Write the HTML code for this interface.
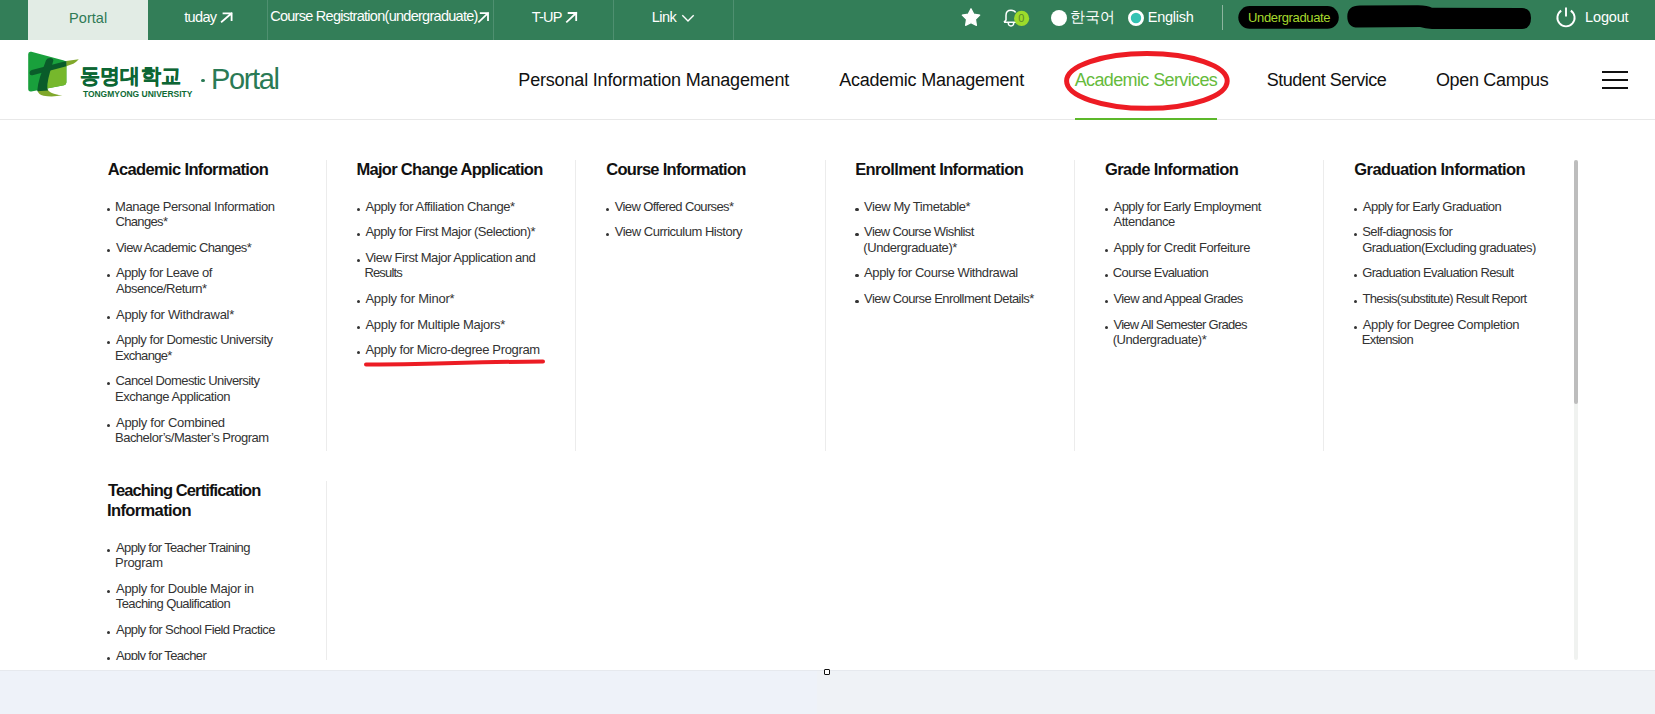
<!DOCTYPE html>
<html><head><meta charset="utf-8"><title>Portal</title>
<style>
html,body{margin:0;padding:0;}
body{width:1655px;height:714px;overflow:hidden;position:relative;background:#fff;font-family:"Liberation Sans", sans-serif;}
.t{position:absolute;white-space:nowrap;line-height:1;font-family:"Liberation Sans", sans-serif;}
.r{position:absolute;}
svg.r{overflow:visible;}
</style></head><body>
<div class="r" style="left:0px;top:0px;width:1655px;height:40px;background:#337e58;"></div>
<div class="r" style="left:28px;top:0px;width:120px;height:40px;background:#e2ece5;"></div>
<div class="r" style="left:267px;top:0px;width:1px;height:40px;background:#4f9070;"></div>
<div class="r" style="left:493px;top:0px;width:1px;height:40px;background:#4f9070;"></div>
<div class="r" style="left:613px;top:0px;width:1px;height:40px;background:#4f9070;"></div>
<div class="r" style="left:733px;top:0px;width:1px;height:40px;background:#4f9070;"></div>
<div class="t" style="left:69.11px;top:10.52px;font-size:14.5px;color:#2f7a55;letter-spacing:0.036px;">Portal</div>
<div class="t" style="left:184.28px;top:9.52px;font-size:14.5px;color:#fff;letter-spacing:-0.681px;">tuday</div>
<div class="t" style="left:270.16px;top:9.22px;font-size:14.5px;color:#fff;letter-spacing:-0.724px;">Course Registration(undergraduate)</div>
<div class="t" style="left:531.87px;top:9.62px;font-size:14.5px;color:#fff;letter-spacing:-0.813px;">T-UP</div>
<div class="t" style="left:651.81px;top:9.52px;font-size:14.5px;color:#fff;letter-spacing:-0.577px;">Link</div>
<svg class="r" style="left:0;top:0" width="1655" height="40"><path d="M221.8,21.8 L231.6,13.3 M223.5,13.3 L231.6,13.3 L231.6,20.1" stroke="#fff" stroke-width="1.8" fill="none" stroke-linecap="square"/></svg>
<svg class="r" style="left:0;top:0" width="1655" height="40"><path d="M479.0,21.8 L488.0,13.100000000000001 M480.7,13.100000000000001 L488.0,13.100000000000001 L488.0,20.1" stroke="#fff" stroke-width="1.8" fill="none" stroke-linecap="square"/></svg>
<svg class="r" style="left:0;top:0" width="1655" height="40"><path d="M566.9,21.8 L576.2,13.0 M568.6,13.0 L576.2,13.0 L576.2,20.1" stroke="#fff" stroke-width="1.8" fill="none" stroke-linecap="square"/></svg>
<svg class="r" style="left:0;top:0" width="1655" height="40"><path d="M682.3,15.3 L688,21 L693.7,15.3" stroke="#fff" stroke-width="1.4" fill="none"/></svg>
<svg class="r" style="left:0;top:0" width="1655" height="40"><path d="M971.00,8.70 L973.76,14.10 L979.75,15.06 L975.47,19.35 L976.41,25.34 L971.00,22.60 L965.59,25.34 L966.53,19.35 L962.25,15.06 L968.24,14.10 Z" fill="#fff" stroke="#fff" stroke-width="1.2" stroke-linejoin="round"/><path d="M1004,22.3 L1006,20 L1006,15.2 Q1006,10.2 1011,10.2 Q1014.5,10.2 1015.6,12.5 M1004,22.3 L1016,22.3" stroke="#fff" stroke-width="1.5" fill="none" stroke-linejoin="round"/><path d="M1008.2,22.6 Q1008.2,26 1011,26 Q1013.8,26 1013.8,22.6" stroke="#fff" stroke-width="1.4" fill="none"/><circle cx="1021.6" cy="18.4" r="7.6" fill="#9ddb2b"/><circle cx="1059" cy="18" r="8" fill="#fff"/><circle cx="1136" cy="18" r="6.6" fill="#33c3b3" stroke="#fff" stroke-width="2.8"/><rect x="1222" y="5" width="1" height="25" fill="#8db59f"/><rect x="1238.3" y="6.1" width="100.5" height="22.6" rx="11.3" fill="#000"/><path d="M1360,5.5 L1418,5.2 Q1428,5.3 1432,7.8 L1522,8 Q1531,8 1531,18 Q1531,28.8 1522,29 L1432,29 Q1425,28.5 1420,27 L1358,27.6 Q1347.3,27.6 1347.3,16.5 Q1347.3,5.5 1360,5.5 Z" fill="#000"/><path d="M1561.2,10.6 A8.6,8.6 0 1 0 1570.8,10.6" stroke="#fff" stroke-width="1.9" fill="none"/><path d="M1566,7.6 L1566,16.6" stroke="#fff" stroke-width="1.9"/></svg>
<div class="t" style="left:1018.17px;top:12.69px;font-size:11px;color:#5b8a2c;">0</div>
<div class="t" style="left:1070.30px;top:8.80px;font-size:15px;color:#fff;">한국어</div>
<div class="t" style="left:1147.71px;top:10.22px;font-size:14.5px;color:#fff;letter-spacing:-0.221px;">English</div>
<div class="t" style="left:1248.00px;top:10.74px;font-size:13px;color:#a6d92d;letter-spacing:-0.346px;">Undergraduate</div>
<div class="t" style="left:1585.11px;top:9.52px;font-size:14.5px;color:#fff;letter-spacing:-0.171px;">Logout</div>
<div class="r" style="left:0px;top:119px;width:1655px;height:1px;background:#e8e8e8;"></div>
<div class="r" style="left:1075px;top:118px;width:142px;height:2px;background:#5cb82a;"></div>
<svg class="r" style="left:0;top:40px" width="300" height="79" viewBox="0 40 300 79"><path d="M28.2,54.3 Q28.2,51 31.4,51.8 L64,60.4 Q66.4,61 66.4,63.6 L66.4,82.3 Q66.4,84.7 64,85.2 L31.3,91.5 Q28.2,92 28.2,88.8 Z" fill="#19a03c"/><path d="M48.6,68.8 L66.4,64 L66.4,82.3 Q66.4,84.7 64,85.2 L47,88.5 Z" fill="#76b82c"/><path d="M66.2,61.1 L78.8,59.3 Q76.5,62 73.3,63.7 L66.2,66.2 Z" fill="#80a82b"/><path d="M37.5,90.6 Q38.5,95 43.5,95.8 Q53,97.2 62.4,95.3 Q55,94.5 50.8,92.4 Q48.3,91 47.5,89.3 Z" fill="#80a82b"/><path d="M31.8,70.1 L66.4,61.1 L66.4,66.2 L32.5,75.2 Q29.6,75.9 29.6,73 Q29.7,70.7 31.8,70.1 Z" fill="#0a5c2a"/><path d="M50.2,57.9 Q53.8,58 53.3,60.8 L50,72 Q48.2,78.5 47.3,84 Q47,88 48,90.6 L37.2,91.3 Q37.8,84 40,77 L46,60.3 Q47.2,57.8 50.2,57.9 Z" fill="#0a5c2a"/></svg>
<svg class="r" style="left:0;top:40px" width="300" height="79" viewBox="0 40 300 79"><text x="80.4" y="82.6" font-family="Liberation Sans" font-weight="bold" font-size="21" fill="#0d6634" stroke="#0d6634" stroke-width="0.35" textLength="100.2" lengthAdjust="spacingAndGlyphs">동명대학교</text><text x="82.9" y="97.3" font-family="Liberation Sans" font-weight="bold" font-size="8.7" fill="#0d6b35" textLength="109.5" lengthAdjust="spacingAndGlyphs">TONGMYONG UNIVERSITY</text></svg>
<div class="r" style="left:201px;top:79px;width:3.6px;height:3.2px;background:#2a7a55;border-radius:50%"></div>
<div class="t" style="left:211.12px;top:65.45px;font-size:29px;color:#2a7a55;letter-spacing:-1.408px;">Portal</div>
<div class="t" style="left:518.32px;top:70.66px;font-size:18px;color:#111;letter-spacing:-0.175px;">Personal Information Management</div>
<div class="t" style="left:839.16px;top:70.66px;font-size:18px;color:#111;letter-spacing:-0.229px;">Academic Management</div>
<div class="t" style="left:1074.66px;top:70.66px;font-size:18px;color:#66bb3c;letter-spacing:-0.617px;">Academic Services</div>
<div class="t" style="left:1266.78px;top:70.66px;font-size:18px;color:#111;letter-spacing:-0.497px;">Student Service</div>
<div class="t" style="left:1435.95px;top:70.66px;font-size:18px;color:#111;letter-spacing:-0.326px;">Open Campus</div>
<div class="r" style="left:1602px;top:71px;width:26px;height:2px;background:#111;"></div>
<div class="r" style="left:1602px;top:79px;width:26px;height:2px;background:#111;"></div>
<div class="r" style="left:1602px;top:87px;width:26px;height:2px;background:#111;"></div>
<svg class="r" style="left:1040px;top:40px" width="220" height="80" viewBox="1040 40 220 80"><ellipse cx="1146.9" cy="80.9" rx="80.3" ry="27.4" fill="none" stroke="#ed1c24" stroke-width="5"/></svg>
<div class="t" style="left:107.79px;top:160.73px;font-size:16.5px;color:#111;font-weight:bold;letter-spacing:-0.650px;">Academic Information</div>
<div class="r" style="left:107.3px;top:207.5px;width:3.2px;height:3.2px;background:#333;border-radius:50%"></div>
<div class="t" style="left:115.03px;top:199.69px;font-size:13px;color:#333;letter-spacing:-0.405px;">Manage Personal Information</div>
<div class="t" style="left:115.44px;top:215.29px;font-size:13px;color:#333;letter-spacing:-0.648px;">Changes*</div>
<div class="r" style="left:107.3px;top:248.7px;width:3.2px;height:3.2px;background:#333;border-radius:50%"></div>
<div class="t" style="left:116.04px;top:240.89px;font-size:13px;color:#333;letter-spacing:-0.615px;">View Academic Changes*</div>
<div class="r" style="left:107.3px;top:274.3px;width:3.2px;height:3.2px;background:#333;border-radius:50%"></div>
<div class="t" style="left:116.07px;top:266.49px;font-size:13px;color:#333;letter-spacing:-0.505px;">Apply for Leave of</div>
<div class="t" style="left:116.07px;top:282.09px;font-size:13px;color:#333;letter-spacing:-0.518px;">Absence/Return*</div>
<div class="r" style="left:107.3px;top:315.5px;width:3.2px;height:3.2px;background:#333;border-radius:50%"></div>
<div class="t" style="left:116.07px;top:307.69px;font-size:13px;color:#333;letter-spacing:-0.307px;">Apply for Withdrawal*</div>
<div class="r" style="left:107.3px;top:341.1px;width:3.2px;height:3.2px;background:#333;border-radius:50%"></div>
<div class="t" style="left:116.07px;top:333.29px;font-size:13px;color:#333;letter-spacing:-0.454px;">Apply for Domestic University</div>
<div class="t" style="left:115.03px;top:348.89px;font-size:13px;color:#333;letter-spacing:-0.701px;">Exchange*</div>
<div class="r" style="left:107.3px;top:382.3px;width:3.2px;height:3.2px;background:#333;border-radius:50%"></div>
<div class="t" style="left:115.44px;top:374.49px;font-size:13px;color:#333;letter-spacing:-0.570px;">Cancel Domestic University</div>
<div class="t" style="left:115.03px;top:390.09px;font-size:13px;color:#333;letter-spacing:-0.469px;">Exchange Application</div>
<div class="r" style="left:107.3px;top:423.5px;width:3.2px;height:3.2px;background:#333;border-radius:50%"></div>
<div class="t" style="left:116.07px;top:415.69px;font-size:13px;color:#333;letter-spacing:-0.306px;">Apply for Combined</div>
<div class="t" style="left:115.03px;top:431.29px;font-size:13px;color:#333;letter-spacing:-0.514px;">Bachelor’s/Master’s Program</div>
<div class="r" style="left:326px;top:160px;width:1px;height:291px;background:#ececec;"></div>
<div class="t" style="left:356.45px;top:160.73px;font-size:16.5px;color:#111;font-weight:bold;letter-spacing:-0.699px;">Major Change Application</div>
<div class="r" style="left:356.6px;top:207.5px;width:3.2px;height:3.2px;background:#333;border-radius:50%"></div>
<div class="t" style="left:365.42px;top:199.69px;font-size:13px;color:#333;letter-spacing:-0.398px;">Apply for Affiliation Change*</div>
<div class="r" style="left:356.6px;top:233.1px;width:3.2px;height:3.2px;background:#333;border-radius:50%"></div>
<div class="t" style="left:365.42px;top:225.29px;font-size:13px;color:#333;letter-spacing:-0.512px;">Apply for First Major (Selection)*</div>
<div class="r" style="left:356.6px;top:258.7px;width:3.2px;height:3.2px;background:#333;border-radius:50%"></div>
<div class="t" style="left:365.39px;top:250.89px;font-size:13px;color:#333;letter-spacing:-0.461px;">View First Major Application and</div>
<div class="t" style="left:364.38px;top:266.49px;font-size:13px;color:#333;letter-spacing:-0.819px;">Results</div>
<div class="r" style="left:356.6px;top:299.9px;width:3.2px;height:3.2px;background:#333;border-radius:50%"></div>
<div class="t" style="left:365.42px;top:292.09px;font-size:13px;color:#333;letter-spacing:-0.217px;">Apply for Minor*</div>
<div class="r" style="left:356.6px;top:325.5px;width:3.2px;height:3.2px;background:#333;border-radius:50%"></div>
<div class="t" style="left:365.42px;top:317.69px;font-size:13px;color:#333;letter-spacing:-0.302px;">Apply for Multiple Majors*</div>
<div class="r" style="left:356.6px;top:351.1px;width:3.2px;height:3.2px;background:#333;border-radius:50%"></div>
<div class="t" style="left:365.42px;top:343.29px;font-size:13px;color:#333;letter-spacing:-0.354px;">Apply for Micro-degree Program</div>
<div class="r" style="left:575px;top:160px;width:1px;height:291px;background:#ececec;"></div>
<div class="t" style="left:606.22px;top:160.73px;font-size:16.5px;color:#111;font-weight:bold;letter-spacing:-0.704px;">Course Information</div>
<div class="r" style="left:606.0px;top:207.5px;width:3.2px;height:3.2px;background:#333;border-radius:50%"></div>
<div class="t" style="left:614.74px;top:199.69px;font-size:13px;color:#333;letter-spacing:-0.623px;">View Offered Courses*</div>
<div class="r" style="left:606.0px;top:233.1px;width:3.2px;height:3.2px;background:#333;border-radius:50%"></div>
<div class="t" style="left:614.74px;top:225.29px;font-size:13px;color:#333;letter-spacing:-0.487px;">View Curriculum History</div>
<div class="r" style="left:825px;top:160px;width:1px;height:291px;background:#ececec;"></div>
<div class="t" style="left:855.15px;top:160.73px;font-size:16.5px;color:#111;font-weight:bold;letter-spacing:-0.613px;">Enrollment Information</div>
<div class="r" style="left:855.4px;top:207.5px;width:3.2px;height:3.2px;background:#333;border-radius:50%"></div>
<div class="t" style="left:864.09px;top:199.69px;font-size:13px;color:#333;letter-spacing:-0.436px;">View My Timetable*</div>
<div class="r" style="left:855.4px;top:233.1px;width:3.2px;height:3.2px;background:#333;border-radius:50%"></div>
<div class="t" style="left:864.09px;top:225.29px;font-size:13px;color:#333;letter-spacing:-0.612px;">View Course Wishlist</div>
<div class="t" style="left:863.34px;top:240.89px;font-size:13px;color:#333;letter-spacing:-0.429px;">(Undergraduate)*</div>
<div class="r" style="left:855.4px;top:274.3px;width:3.2px;height:3.2px;background:#333;border-radius:50%"></div>
<div class="t" style="left:864.12px;top:266.49px;font-size:13px;color:#333;letter-spacing:-0.413px;">Apply for Course Withdrawal</div>
<div class="r" style="left:855.4px;top:299.9px;width:3.2px;height:3.2px;background:#333;border-radius:50%"></div>
<div class="t" style="left:864.09px;top:292.09px;font-size:13px;color:#333;letter-spacing:-0.583px;">View Course Enrollment Details*</div>
<div class="r" style="left:1074px;top:160px;width:1px;height:291px;background:#ececec;"></div>
<div class="t" style="left:1104.92px;top:160.73px;font-size:16.5px;color:#111;font-weight:bold;letter-spacing:-0.570px;">Grade Information</div>
<div class="r" style="left:1104.7px;top:207.5px;width:3.2px;height:3.2px;background:#333;border-radius:50%"></div>
<div class="t" style="left:1113.47px;top:199.69px;font-size:13px;color:#333;letter-spacing:-0.503px;">Apply for Early Employment</div>
<div class="t" style="left:1113.47px;top:215.29px;font-size:13px;color:#333;letter-spacing:-0.441px;">Attendance</div>
<div class="r" style="left:1104.7px;top:248.7px;width:3.2px;height:3.2px;background:#333;border-radius:50%"></div>
<div class="t" style="left:1113.47px;top:240.89px;font-size:13px;color:#333;letter-spacing:-0.455px;">Apply for Credit Forfeiture</div>
<div class="r" style="left:1104.7px;top:274.3px;width:3.2px;height:3.2px;background:#333;border-radius:50%"></div>
<div class="t" style="left:1112.84px;top:266.49px;font-size:13px;color:#333;letter-spacing:-0.639px;">Course Evaluation</div>
<div class="r" style="left:1104.7px;top:299.9px;width:3.2px;height:3.2px;background:#333;border-radius:50%"></div>
<div class="t" style="left:1113.44px;top:292.09px;font-size:13px;color:#333;letter-spacing:-0.618px;">View and Appeal Grades</div>
<div class="r" style="left:1104.7px;top:325.5px;width:3.2px;height:3.2px;background:#333;border-radius:50%"></div>
<div class="t" style="left:1113.44px;top:317.69px;font-size:13px;color:#333;letter-spacing:-0.722px;">View All Semester Grades</div>
<div class="t" style="left:1112.69px;top:333.29px;font-size:13px;color:#333;letter-spacing:-0.429px;">(Undergraduate)*</div>
<div class="r" style="left:1323px;top:160px;width:1px;height:291px;background:#ececec;"></div>
<div class="t" style="left:1354.27px;top:160.73px;font-size:16.5px;color:#111;font-weight:bold;letter-spacing:-0.568px;">Graduation Information</div>
<div class="r" style="left:1354.0px;top:207.5px;width:3.2px;height:3.2px;background:#333;border-radius:50%"></div>
<div class="t" style="left:1362.82px;top:199.69px;font-size:13px;color:#333;letter-spacing:-0.540px;">Apply for Early Graduation</div>
<div class="r" style="left:1354.0px;top:233.1px;width:3.2px;height:3.2px;background:#333;border-radius:50%"></div>
<div class="t" style="left:1362.26px;top:225.29px;font-size:13px;color:#333;letter-spacing:-0.584px;">Self-diagnosis for</div>
<div class="t" style="left:1362.20px;top:240.89px;font-size:13px;color:#333;letter-spacing:-0.557px;">Graduation(Excluding graduates)</div>
<div class="r" style="left:1354.0px;top:274.3px;width:3.2px;height:3.2px;background:#333;border-radius:50%"></div>
<div class="t" style="left:1362.20px;top:266.49px;font-size:13px;color:#333;letter-spacing:-0.639px;">Graduation Evaluation Result</div>
<div class="r" style="left:1354.0px;top:299.9px;width:3.2px;height:3.2px;background:#333;border-radius:50%"></div>
<div class="t" style="left:1362.56px;top:292.09px;font-size:13px;color:#333;letter-spacing:-0.680px;">Thesis(substitute) Result Report</div>
<div class="r" style="left:1354.0px;top:325.5px;width:3.2px;height:3.2px;background:#333;border-radius:50%"></div>
<div class="t" style="left:1362.82px;top:317.69px;font-size:13px;color:#333;letter-spacing:-0.390px;">Apply for Degree Completion</div>
<div class="t" style="left:1361.78px;top:333.29px;font-size:13px;color:#333;letter-spacing:-0.648px;">Extension</div>
<svg class="r" style="left:0;top:0" width="1655" height="714"><path d="M366,364.6 Q420,364.2 455,363 Q500,361.8 543,361.5" stroke="#ec1c24" stroke-width="4" stroke-linecap="round" fill="none"/></svg>
<div class="r" style="left:0;top:0;width:1655px;height:660px;overflow:hidden">
<div class="t" style="left:108.01px;top:481.73px;font-size:16.5px;color:#111;font-weight:bold;letter-spacing:-0.889px;">Teaching Certification</div>
<div class="t" style="left:107.10px;top:501.63px;font-size:16.5px;color:#111;font-weight:bold;letter-spacing:-0.637px;">Information</div>
<div class="r" style="left:107.3px;top:548.5px;width:3.2px;height:3.2px;background:#333;border-radius:50%"></div>
<div class="t" style="left:116.07px;top:540.69px;font-size:13px;color:#333;letter-spacing:-0.657px;">Apply for Teacher Training</div>
<div class="t" style="left:115.03px;top:556.29px;font-size:13px;color:#333;letter-spacing:-0.304px;">Program</div>
<div class="r" style="left:107.3px;top:589.7px;width:3.2px;height:3.2px;background:#333;border-radius:50%"></div>
<div class="t" style="left:116.07px;top:581.89px;font-size:13px;color:#333;letter-spacing:-0.333px;">Apply for Double Major in</div>
<div class="t" style="left:115.81px;top:597.49px;font-size:13px;color:#333;letter-spacing:-0.585px;">Teaching Qualification</div>
<div class="r" style="left:107.3px;top:630.9px;width:3.2px;height:3.2px;background:#333;border-radius:50%"></div>
<div class="t" style="left:116.07px;top:623.09px;font-size:13px;color:#333;letter-spacing:-0.591px;">Apply for School Field Practice</div>
<div class="r" style="left:107.3px;top:656.5px;width:3.2px;height:3.2px;background:#333;border-radius:50%"></div>
<div class="t" style="left:116.07px;top:648.69px;font-size:13px;color:#333;letter-spacing:-0.641px;">Apply for Teacher</div>
<div class="t" style="left:115.44px;top:664.29px;font-size:13px;color:#333;letter-spacing:-0.430px;">Certification</div>
<div class="r" style="left:326px;top:481px;width:1px;height:179px;background:#ececec;"></div>
</div>
<div class="r" style="left:1574px;top:160px;width:4px;height:500px;background:#f0f2f0;border-radius:2px"></div>
<div class="r" style="left:1574px;top:160px;width:4px;height:244px;background:#bdbdbd;border-radius:2px"></div>
<div class="r" style="left:0px;top:670px;width:1655px;height:44px;background:#eff2f6;"></div>
<div class="r" style="left:0px;top:670px;width:817px;height:44px;background:#eef2f9;"></div>
<div class="r" style="left:0px;top:670px;width:1655px;height:1px;background:#e6e9ee;"></div>
<div class="r" style="left:824px;top:669px;width:6px;height:6px;background:#fff;box-sizing:border-box;border:1.6px solid #111;border-radius:1px"></div>
</body></html>
